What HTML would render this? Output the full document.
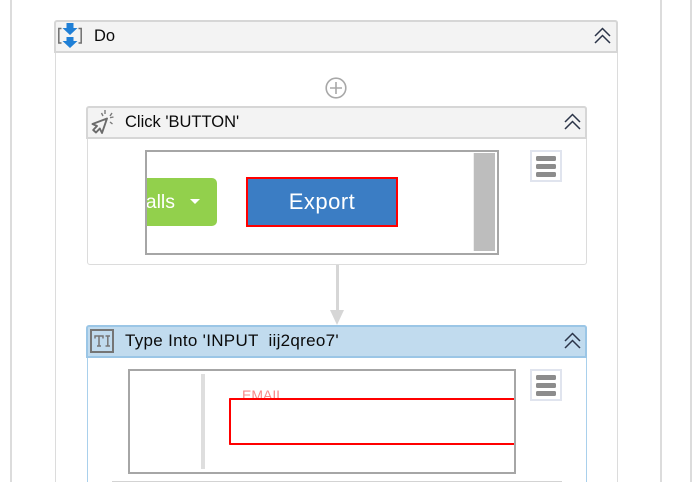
<!DOCTYPE html>
<html style="overflow:hidden"><head><meta charset="utf-8">
<style>
html,body{margin:0;padding:0;background:#fff;width:698px;height:482px;overflow:hidden}
#w{position:absolute;left:0;top:0;width:698px;height:482px;overflow:hidden;font-family:"Liberation Sans",sans-serif;color:#111;background:#fff}
.a{position:absolute;box-sizing:border-box}
.t{position:absolute;font-size:16.5px;line-height:20px;white-space:pre;color:#0a0a0a}
svg{position:absolute;overflow:visible}
</style></head><body><div id="w">
<div class="a" style="left:10px;top:0;width:2px;height:482px;background:#dcdcdc"></div>
<div class="a" style="left:660px;top:0;width:2px;height:482px;background:#dcdcdc"></div>
<div class="a" style="left:690px;top:0;width:2px;height:482px;background:#dcdcdc"></div>

<!-- Do -->
<div class="a" style="left:54.5px;top:20px;width:563px;height:462px;border:1.5px solid #dcdcdc;border-bottom:0;border-radius:3px 3px 0 0"></div>
<div class="a" style="left:54px;top:20px;width:564px;height:33px;background:#f3f3f3;border:2px solid #d6d6d6;border-radius:3px 3px 0 0"></div>
<svg style="left:57px;top:23px" width="28" height="26" viewBox="0 0 28 26">
<path d="M4.5 5.5H1.8V20H4.5M21.5 5.5H24.2V20H21.5" fill="none" stroke="#6f6f6f" stroke-width="1.5"/>
<path d="M9.5 0H16.5V5H20.5L13 12L5.5 5H9.5Z" fill="#1f7fd6"/>
<path d="M9.5 14H16.5V18H20.5L13 25L5.5 18H9.5Z" fill="#1f7fd6"/>
</svg>
<div class="t" style="left:94px;top:26px">Do</div>
<svg style="left:594px;top:27px" width="17" height="17" viewBox="0 0 17 17"><path d="M1 9L8.5 1.5L16 9M1 16L8.5 8.5L16 16" fill="none" stroke="#2b3448" stroke-width="1.5"/></svg>

<!-- plus -->
<svg style="left:325px;top:77px" width="22" height="22" viewBox="0 0 22 22"><circle cx="11" cy="11" r="9.8" fill="none" stroke="#a8a8a8" stroke-width="1.6"/><path d="M11 5V17M5 11H17" stroke="#a8a8a8" stroke-width="1.6"/></svg>

<!-- Click -->
<div class="a" style="left:86.5px;top:106px;width:500px;height:159px;background:#fff;border:1.5px solid #dcdcdc;border-radius:3px"></div>
<div class="a" style="left:86px;top:106px;width:501px;height:33px;background:#f3f3f3;border:2px solid #d6d6d6;border-radius:3px 3px 0 0"></div>
<svg style="left:90px;top:109px" width="26" height="26" viewBox="0 0 26 26">
<path d="M17 9.5L2.5 15L7 17L3.2 21L6 23.5L9.8 19.5L12 24Z" fill="none" stroke="#6b6b6b" stroke-width="1.9" stroke-linejoin="round"/>
<path d="M15 1V5M11.5 4L13 7M22 4L20 7M23.5 8L20 8.7M20 13L22.5 15" stroke="#7a7a7a" stroke-width="1.4" fill="none"/>
</svg>
<div class="t" style="left:125px;top:112px">Click 'BUTTON'</div>
<svg style="left:564px;top:113px" width="17" height="17" viewBox="0 0 17 17"><path d="M1 9L8.5 1.5L16 9M1 16L8.5 8.5L16 16" fill="none" stroke="#2b3448" stroke-width="1.5"/></svg>

<div class="a" style="left:145px;top:150px;width:354px;height:105px;border:2px solid #a6a6a6;background:#fff;overflow:hidden">
  <div class="a" style="left:-30px;top:26px;width:100px;height:48px;background:#92d04c;border-radius:5px"></div>
  <div class="t" style="top:30px;width:50px;line-height:40px;font-size:19.5px;color:#fff;text-align:right;left:-22px">alls</div>
  <svg style="left:43px;top:47px" width="10" height="5"><path d="M0 0H10L5 5Z" fill="#fff"/></svg>
  <div class="a" style="left:99px;top:25px;width:152px;height:50px;background:#3b7dc4;border:2px solid #f00"></div>
  <div class="t" style="left:99px;top:25px;width:152px;height:50px;line-height:50px;text-align:center;color:#fff;font-size:22px;letter-spacing:.5px">Export</div>
  <div class="a" style="left:325.5px;top:1px;width:1.5px;height:98px;background:#eee"></div>
  <div class="a" style="left:327px;top:1px;width:21px;height:98px;background:#bdbdbd"></div>
</div>
<div class="a" style="left:530px;top:150px;width:32px;height:32px;border:2px solid #e0e4ee;background:#fff"></div>
<div class="a" style="left:536px;top:156px;width:20px;height:4.5px;background:#8c8c8c;border-radius:1.5px"></div>
<div class="a" style="left:536px;top:164px;width:20px;height:4.5px;background:#8c8c8c;border-radius:1.5px"></div>
<div class="a" style="left:536px;top:172px;width:20px;height:4.5px;background:#8c8c8c;border-radius:1.5px"></div>

<!-- connector -->
<div class="a" style="left:336px;top:265px;width:2.5px;height:46px;background:#d6d6d6"></div>
<svg style="left:330px;top:310px" width="14" height="15"><path d="M0 0H14L7 15Z" fill="#d6d6d6"/></svg>

<!-- Type -->
<div class="a" style="left:86.5px;top:325px;width:500px;height:170px;background:#fff;border:1.5px solid #a9d0ec;border-radius:3px"></div>
<div class="a" style="left:86px;top:325px;width:501px;height:33px;background:#c1dbee;border:2px solid #9bc6e6;border-radius:3px 3px 0 0"></div>
<svg style="left:90px;top:329px" width="25" height="25" viewBox="0 0 25 25">
<rect x="1" y="1" width="22" height="22" fill="none" stroke="#757575" stroke-width="2"/>
<path d="M5 9.5V7H13V9.5M9 7V17M7 17H11M15.5 7H20M15.5 17H20M17.8 7V17" fill="none" stroke="#757575" stroke-width="1.5"/>
</svg>
<div class="t" style="left:125px;top:331px;font-size:17px;letter-spacing:.3px">Type Into 'INPUT  iij2qreo7'</div>
<svg style="left:564px;top:332px" width="17" height="17" viewBox="0 0 17 17"><path d="M1 9L8.5 1.5L16 9M1 16L8.5 8.5L16 16" fill="none" stroke="#2b3448" stroke-width="1.5"/></svg>

<div class="a" style="left:128px;top:369px;width:388px;height:105px;border:2px solid #a6a6a6;background:#fff;overflow:hidden">
  <div class="a" style="left:71px;top:3px;width:3.5px;height:95px;background:#dedede"></div>
  <div class="t" style="left:112px;top:15px;font-size:14px;line-height:18px;color:#f98a8a">EMAIL</div>
  <div class="a" style="left:99px;top:27px;width:300px;height:47px;background:#fff;border:2px solid #f00;border-right:0;border-radius:1px"></div>
</div>
<div class="a" style="left:530px;top:369px;width:32px;height:32px;border:2px solid #e0e4ee;background:#fff"></div>
<div class="a" style="left:536px;top:375px;width:20px;height:4.5px;background:#8c8c8c;border-radius:1.5px"></div>
<div class="a" style="left:536px;top:383px;width:20px;height:4.5px;background:#8c8c8c;border-radius:1.5px"></div>
<div class="a" style="left:536px;top:391px;width:20px;height:4.5px;background:#8c8c8c;border-radius:1.5px"></div>
<div class="a" style="left:112px;top:481px;width:450px;height:1px;background:#d3d3d3"></div>
</div></body></html>
